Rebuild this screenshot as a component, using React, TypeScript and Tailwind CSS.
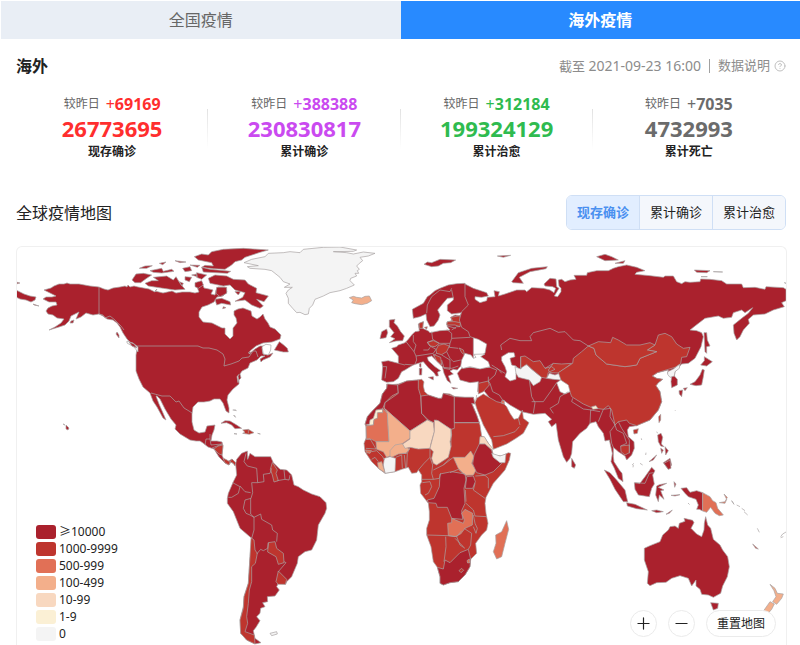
import React, { useState } from "react";
import { CircleHelp, Minus, Plus } from "lucide-react";
import { clsx } from "clsx";

const STATS = [
  { label: "现存确诊", total: "26773695", change: "69169", color: "text-[#ff2e2e]" },
  { label: "累计确诊", total: "230830817", change: "388388", color: "text-[#ca4af0]" },
  { label: "累计治愈", total: "199324129", change: "312184", color: "text-[#2fbb4f]" },
  { label: "累计死亡", total: "4732993", change: "7035", color: "text-[#6b6b6b]" },
];

const LEGEND = [
  { label: "≥10000", color: "bg-[#aa212d]" },
  { label: "1000-9999", color: "bg-[#be352e]" },
  { label: "500-999", color: "bg-[#e17056]" },
  { label: "100-499", color: "bg-[#f3af8b]" },
  { label: "10-99", color: "bg-[#f8d8c0]" },
  { label: "1-9", color: "bg-[#fbf0d5]" },
  { label: "0", color: "bg-[#f4f4f4]" },
];

const FILLS = {
  a: "#aa212d",
  b: "#be352e",
  c: "#e17056",
  d: "#f3af8b",
  e: "#f8d8c0",
  f: "#fbf0d5",
  z: "#f4f4f4",
  sea: "#ffffff",
  line: "none",
};

interface Region {
  id: string;
  x: number;
  y: number;
  scale: number;
  shapes: [keyof typeof FILLS, string][];
}

// each region has its own origin, outlines are on a 3x grid except for the mainland
const REGIONS: Region[] = [
  {
    id: "north-america",
    x: 0,
    y: 0,
    scale: 1,
    shapes: [
      ["a", "M44 290L51 288 54 286 59 284 64 284 67 283 70 284 79 284 90 286 99 287 104 289 108 290 113 288 120 287 125 286 127 287 128 285 130 287 134 286 138 287 149 289 155 292 157 289 155 291 163 293 172 291 176 293 182 292 190 292 195 293 199 292 197 287 202 282 204 288 209 289 213 290 211 294 215 295 216 290 218 287 225 287 227 292 223 296 217 297 214 302 208 305 202 307 199 312 199 317 203 322 212 323 222 328 225 328 225 334 230 339 233 336 233 328 237 323 236 318 234 315 234 311 238 309 243 308 251 311 252 316 257 319 260 317 263 314 265 319 268 323 270 327 275 329 281 335 280 339 272 342 263 343 256 346 250 351 249 354 255 349 260 346 264 346 262 348 263 354 268 355 273 353 270 357 263 360 261 362 260 359 265 356 261 356 257 360 250 363 248 368 242 371 240 374 241 378 239 380 239 384 233 389 228 395 227 400 229 408 229 413 226 411 223 403 220 399 214 399 210 401 204 402 198 402 193 407 192 414 192 422 194 430 199 433 205 432 207 426 215 425 214 430 212 435 211 441 217 441 222 442 223 446 222 455 224 460 227 462 232 459 236 463 234 464 231 462 229 465 225 463 219 457 214 449 208 447 203 443 200 441 196 441 190 440 180 434 175 429 176 425 171 419 165 409 160 399 157 396 156 396 159 404 163 413 166 420 163 418 157 407 153 401 150 393 143 387 139 379 136 371 136 355 137 349 131 343 127 339 123 333 120 327 117 323 113 320 107 319 103 316 99 314 93 315 86 313 81 317 76 319 79 312 71 316 69 321 65 325 59 327 49 330 55 327 61 323 64 319 57 318 53 315 48 314 46 311 48 308 52 306 57 305 56 302 49 302 43 299 46 297 52 297 56 296 50 293Z"],
      ["a", "M16 290L24 294 30 296 36 297 35 300 31 302 26 300 20 299 16 297ZM16 282L20 283 16 284ZM33 304L39 306 34 305ZM71 321L74 320 73 323 70 323ZM117 332L119 335 119 338 116 334Z"],
      ["sea", "M127 341L133 343 138 347 138 352 134 347 127 343Z"],
      ["a", "M129 342L134 344 137 348 132 346Z"],
      ["line", "M99 287V314L103 315 105 318 110 316 115 320 121 326 124 330M136 346L198 346 203 348 209 348 217 350 223 354 225 359 224 366 231 364 239 361 242 358 249 357 253 351 256 351 258 357M151 393L162 396 170 396 176 402 179 401 184 408 189 411 192 413"],
      ["line", "M205 445L206 439 210 439 210 434M210 439L211 445 222 444M212 448L222 444"],
      ["b", "M214 449L218 446 223 445 222 455 219 454Z"],
      ["b", "M223 458L227 460 230 462 232 459 236 463 235 466 233 463 230 462 229 465 225 463Z"],
      ["a", "M66 425L69 428 68 430 66 429ZM63 424L65 425Z"],
    ],
  },
  {
    id: "arctic",
    x: 120,
    y: 240,
    scale: 3,
    shapes: [
      ["a", "M223 50L245 42 265 45 275 35 310 28 370 25 445 30 420 37 405 42 375 52 365 60 345 65 335 75 315 88 280 86 245 82 255 76 280 78 275 68 235 60Z"],
      ["a", "M265 115L285 105 320 108 340 118 375 120 385 132 410 145 408 158 445 168 432 185 410 178 430 198 420 205 395 195 375 180 345 184 368 172 375 158 345 150 330 135 310 138 270 130Z"],
      ["a", "M36 120L48 102 70 100 95 105 80 115 62 128 45 128ZM75 130L95 122 115 122 100 112 140 108 160 120 168 110 180 130 195 148 165 150 130 145 85 138ZM58 85L75 78 97 77 80 85ZM90 92L125 85 130 94 155 88 162 94 125 99 100 97ZM118 70L138 66 128 74ZM165 62L198 66 180 68ZM188 85L210 80 215 92 195 95ZM210 75L240 76 232 82ZM245 82L270 88 332 94 322 100 250 96ZM215 105L230 102 232 110ZM230 98L260 105 245 118 230 112ZM195 110L215 112 208 125 195 120ZM225 128L245 122 250 135 235 145 225 140ZM290 142L320 142 320 160 300 170 288 160ZM345 155L362 154 355 165ZM285 178L305 175 330 185 332 195 305 190 290 195ZM310 200L318 203 308 206ZM178 125L190 130 186 138Z"],
      ["a", "M463 330L478 305 490 314 502 325 505 336 490 336ZM385 338L390 335 392 340Z"],
      ["sea", "M426 320L438 313 453 315 452 330 445 345 430 342Z"],
      ["line", "M338 510L348 510M340 525L346 532"],
      ["sea", "M357 403L354 408 356 420 354 428 351 410Z"],
    ],
  },
  {
    id: "greenland",
    x: 240,
    y: 240,
    scale: 3,
    shapes: [
      ["z", "M12 68L35 58 75 50 85 40 130 38 150 35 180 38 190 28 250 22 300 21 350 30 340 34 280 35 320 38 340 42 370 36 405 40 385 48 360 52 368 62 358 70 350 78 358 88 352 92 356 100 345 100 350 108 332 115 330 122 343 135 320 145 300 152 270 158 250 168 225 178 218 195 208 205 205 222 195 224 180 217 170 218 158 205 145 190 145 175 138 160 145 150 157 142 133 142 150 132 130 125 120 112 105 100 95 92 75 88 30 85 22 80 55 77Z"],
      ["d", "M328 173L340 169 350 172 365 174 375 169 388 168 395 182 382 190 365 194 345 191 335 188 340 180Z"],
    ],
  },
  {
    id: "south-america",
    x: 140,
    y: 390,
    scale: 3,
    shapes: [
      ["a", "M287 222L290 208 305 190 322 183 323 208 330 190 345 200 375 200 392 200 400 218 420 238 440 240 455 255 462 285 475 290 490 300 515 312 540 320 558 338 560 355 555 370 535 405 530 450 515 480 495 485 475 500 472 520 455 560 440 575 437 583 415 580 410 590 418 600 405 618 382 620 383 635 368 638 375 650 362 655 360 670 350 680 360 692 348 712 340 722 345 745 363 758 345 762 320 750 302 730 300 690 310 650 312 620 325 580 330 500 335 445 300 415 280 365 262 340 262 325 265 310 280 275 290 255Z"],
      ["b", "M333 443L342 450 345 480 352 490 346 520 335 530 335 575 328 600 325 640 320 680 323 700 315 725 343 735 345 762 320 750 302 730 300 690 310 655 312 620 325 580 330 500Z"],
      ["b", "M385 458L405 455 410 475 430 490 432 518 415 523 408 500 383 486ZM415 543L440 568 436 583 415 583 408 575ZM397 217L412 240 408 250 415 272 402 276 397 255 391 238Z"],
      ["a", "M243 100L255 92 270 93 290 105 305 115 285 116 275 105 260 98ZM282 131L291 132ZM353 130L361 132Z"],
      ["b", "M308 120L325 118 342 128 328 133 308 130 315 127Z"],
      ["z", "M390 730L410 725 412 732 395 737Z"],
      ["line", "M318 190L312 215 322 228 350 235 353 278 335 278 338 308 333 325 315 330 310 355 318 370 330 375 342 382 362 372 365 388 395 405 398 420 412 430 410 455M300 288L315 305 332 308M278 278L300 290 295 310 275 322 265 322M353 278L372 275 370 253 390 250 395 235M412 272L435 268 432 240M435 268L447 270 450 255M332 325L332 372 342 382 342 420 335 445M350 492L362 478 370 482 383 475 385 458M432 515L438 518 415 545M325 118V130M280 60L290 62M283 75L287 82"],
    ],
  },
  {
    id: "africa",
    x: 350,
    y: 370,
    scale: 3,
    shapes: [
      ["b", "M110 42L125 44 145 42 170 33 200 30 215 28 222 35 220 48 224 65 235 75 265 85 275 85 280 70 300 72 315 80 345 82 370 82 375 102 365 100 380 135 390 165 395 198 403 202 425 235 430 255 455 258 475 248 482 250 478 270 465 300 430 340 408 382 405 400 408 430 414 460 410 480 395 495 377 520 380 550 362 568 360 590 345 615 325 635 300 638 280 645 270 640 270 620 262 592 250 575 243 530 230 495 230 475 238 450 238 425 235 400 212 370 210 345 215 335 215 315 205 300 200 308 185 310 175 292 155 298 135 305 105 310 85 295 65 275 45 245 42 220 48 205 48 170 45 163 52 140 65 125 90 100 97 72 110 55Z"],
      ["f", "M75 120L98 118 98 128 85 128 82 145 72 150 70 165 50 166Z"],
      ["a", "M112 42L143 45 145 68 125 78 105 98 98 116 78 120 70 145 60 150 58 163 45 163 52 140 65 125 90 100 97 72 110 55Z"],
      ["a", "M143 45L170 33 205 30 205 55 212 78 215 130 232 150 180 183 103 115 105 98 145 70Z"],
      ["a", "M213 78L235 75 265 85 275 85 280 70 313 80 313 175 303 178 258 150 250 158 235 150 215 130Z"],
      ["a", "M313 80L345 82 370 82 375 102 365 100 380 135 388 158 313 158Z"],
      ["c", "M98 115L112 130 117 215 78 215 65 208 50 208 48 168 70 165 72 148 82 145 82 128 98 128Z"],
      ["d", "M103 115L180 183 180 205 155 222 130 240 120 258 110 262 100 245 80 238 78 215 117 215 112 130Z"],
      ["d", "M120 258L120 242 135 225 157 221 178 238 168 250 145 252 125 262Z"],
      ["e", "M180 183L232 150 250 158 253 185 243 220 240 235 205 237 180 232 165 235 158 222 180 207Z"],
      ["e", "M253 150L265 152 303 178 305 195 300 215 303 230 295 262 260 285 250 280 245 265 250 245 240 235 253 185Z"],
      ["z", "M103 265L120 260 137 265 135 305 105 310 100 285Z"],
      ["d", "M83 278L95 275 105 308 85 295Z"],
      ["c", "M47 240L65 242 60 250 50 248Z"],
      ["d", "M310 262L330 262 345 262 362 243 372 260 365 280 378 300 370 315 345 316 325 295Z"],
      ["e", "M390 200L403 200 415 220 428 235 425 240 405 222 388 222Z"],
      ["a", "M388 222L405 222 425 240 430 262 455 280 430 305 405 315 380 308 368 282 372 255Z"],
      ["z", "M425 250L450 258 468 252 465 278 450 278 430 262Z"],
      ["a", "M270 312L305 305 345 312 348 330 342 355 345 400 335 422 338 448 305 445 292 412 262 412 258 400 235 398 232 390 252 385 268 350ZM350 320L370 318 376 335 368 355 346 355Z"],
      ["c", "M293 460L305 458 305 445 340 460 343 450 335 430 345 418 368 430 367 465 345 475 332 492 315 500 295 497Z"],
      ["a", "M262 592L280 597 285 570 300 578 330 548 355 538 362 568 360 590 345 615 325 635 300 638 280 645 270 640 270 620Z"],
      ["b", "M327 602L335 595 341 601 333 608Z"],
      ["c", "M351 572L358 567 360 578 353 579ZM470 452L476 478 465 520 455 560 440 567 430 545 438 520 437 495 455 485Z"],
      ["line", "M45 208L60 206 78 237 48 235M65 245L80 242 98 260 103 270M65 268L75 262 85 275M137 262L155 255 157 295M163 255L167 295M157 250L172 250 180 232M172 250L170 293M205 300L222 280 240 262 240 237M240 262L248 285 245 310 250 328 215 328M250 300L280 285 300 265M250 328L268 325 272 310M280 285L310 262M217 338L240 335 245 350 235 370 225 375M345 315L325 298 300 308M376 318L405 316 415 325 415 355M375 340L370 360 405 385M346 360L348 395M348 400L370 420 375 438 410 440M370 435L375 460 382 475 378 490 370 470M342 475L365 490 362 525 355 538M335 482L320 500 330 525 345 535M230 495L295 497 322 500M287 500L288 530 282 575M315 505L340 530M303 178V230M313 158H388M430 200L440 198 485 188"],
    ],
  },
  {
    id: "europe",
    x: 370,
    y: 270,
    scale: 3,
    shapes: [
      ["a", "M127 118L145 108 160 100 172 80 180 75 195 62 210 55 235 45 260 41 285 40 290 55 310 60 310 270 270 290 262 300 250 298 240 303 250 312 235 318 243 340 232 332 222 310 217 290 205 278 185 258 172 262 175 272 195 290 212 302 203 306 205 318 198 318 192 308 175 293 160 275 145 280 130 285 118 292 105 300 95 305 85 325 70 335 50 337 35 330 38 290 35 275 55 272 85 280 85 258 65 235 80 230 85 225 105 218 115 208 125 195 135 185 148 183 145 162 160 155 158 175 175 183 180 188 210 182 240 180 232 170 230 158 245 152 242 142 255 135 270 137 275 128 245 132 232 122 232 105 250 90 250 83 232 85 215 105 203 120 210 135 205 150 192 168 180 170 170 150 168 132 150 140 130 145Z"],
      ["a", "M58 150L75 148 72 158 82 168 92 185 103 198 98 212 78 213 58 218 75 206 62 200 72 188 58 170ZM35 185L50 177 53 188 48 203 30 206ZM148 282L153 280 153 292 149 290ZM148 295L156 295 155 315 148 315ZM175 322L190 320 190 330ZM245 352L263 355 250 357Z"],
      ["b", "M147 160L160 155 158 175 148 175ZM163 172L172 170 170 178ZM172 217L190 212 208 220 195 230 180 228ZM198 240L205 226 222 222 238 228 230 245 215 254 200 250ZM190 253L212 262 215 285 200 273ZM268 234L280 240 284 255 275 248ZM242 142L270 137 272 152 270 170 255 165 230 165 232 155 248 152Z"],
      ["line", "M245 55L240 65 210 60 185 80 172 105 170 130M245 60L250 85M230 178L245 190 245 205 240 220 208 220 188 208 185 185M245 180L260 170 270 170M245 205L300 202M240 220L238 232 265 235M230 245L240 265 250 275 272 270M130 195L130 215 138 225 132 245 108 215M132 245L138 258 190 250 198 238 180 228 172 217 190 210M105 283L130 285M138 258L140 270 135 282M38 290L50 290 45 325M85 280L105 285M215 255L240 270 240 298 222 295 215 270M220 292L245 295 265 288M160 240L175 240 180 232M200 250L190 258M232 155H255L270 158M232 168L258 175"],
    ],
  },
  {
    id: "asia",
    x: 490,
    y: 240,
    scale: 3,
    shapes: [
      ["a", "M-75 132L-50 145 -10 158 -5 168 -25 172 -45 170 -45 178 -30 188 -10 182 -8 172 15 170 12 152 28 155 25 168 45 162 80 150 105 150 110 155 125 143 160 145 180 150 192 158 197 145 188 140 165 138 162 132 180 115 198 117 200 140 207 145 193 168 203 170 213 155 213 145 207 138 205 120 215 118 225 125 240 120 258 118 252 106 290 106 292 98 320 92 355 92 370 85 385 80 410 75 440 82 465 92 440 97 435 103 480 107 520 112 525 108 550 108 560 125 575 131 585 125 600 127 630 125 632 117 660 118 695 122 710 132 755 132 760 143 795 142 825 148 828 140 880 143 888 148 888 182 875 188 883 200 850 210 825 222 790 225 775 238 778 250 760 270 750 290 740 300 732 280 730 255 755 235 775 220 788 203 765 218 755 210 730 218 725 232 700 235 685 228 645 235 615 258 600 270 620 272 635 278 640 290 633 320 615 355 595 370 575 372 555 395 553 408 562 418 562 435 545 443 543 425 545 410 533 400 535 390 502 398 487 408 500 415 518 418 505 428 498 437 510 455 515 485 505 510 480 540 450 552 440 557 418 560 412 570 415 590 432 605 433 625 425 645 410 660 405 648 385 635 370 622 370 650 372 665 388 690 396 700 399 725 385 715 373 685 363 665 367 640 358 600 345 603 340 580 325 560 318 545 300 550 290 565 270 580 248 605 245 640 240 655 230 667 220 650 205 600 198 550 185 560 175 545 185 538 165 520 130 523 95 515 60 495 40 480 45 500 20 500 -20 450 -37 455 -35 425 -60 428 -90 420 -98 400 -85 385 -60 382 -35 385 0 382 -15 360 -30 348 -15 340 -10 312 -35 298 -60 290 -65 275 -85 262 -92 240 -85 215 -65 195 -75 170Z"],
      ["b", "M-40 475L-20 462 20 485 40 490 50 500 60 520 72 538 85 535 97 510 100 535 117 548 100 580 78 595 50 612 10 628 5 600 -20 555 -40 505 -45 488Z"],
      ["b", "M-35 430L-5 423 -2 435 -20 455 -35 462Z"],
      ["c", "M35 482L43 482 42 492 35 490Z"],
      ["sea", "M-88 380L-85 360 -75 340 -57 345 -50 355 -42 352 -48 343 -15 342 -28 350 -5 365 0 380 -30 387 -60 380 -80 385Z"],
      ["sea", "M35 350L55 338 72 338 75 350 60 355 65 375 78 378 85 388 78 400 78 418 60 423 45 410 50 395 45 380 35 362Z"],
      ["z", "M75 380L92 387 100 373 112 375 125 388 155 412 150 425 130 437 118 420 85 412 78 400Z"],
      ["b", "M92 350L105 348 130 365 150 362 165 385 185 380 195 388 175 397 170 415 155 412 125 387 110 373 92 385ZM175 390L190 370 215 372 245 370 225 385 205 399 180 398Z"],
      ["z", "M170 415L178 400 195 405 208 400 213 420 190 418Z"],
      ["b", "M295 318L312 325 318 345 350 372 405 380 440 375 450 355 500 335 472 330 495 315 505 285 525 280 545 290 560 312 580 325 600 322 590 350 575 352 572 372 555 382 535 388 502 398 487 408 500 415 518 418 505 428 498 437 510 455 515 485 505 510 480 540 440 557 418 550 410 540 385 545 375 555 365 510 355 497 340 508 305 503 280 492 245 470 238 450 213 420 205 398 225 385 248 370 250 355 275 335Z"],
      ["b", "M295 318L325 305 362 308 368 292 385 300 410 315 450 315 480 308 495 315 472 330 500 335 450 355 440 375 405 380 350 372 318 345 312 325Z"],
      ["sea", "M200 428L212 420 235 435 240 455 225 462 210 455Z"],
      ["z", "M533 395L550 387 570 372 568 385 555 395 553 408 540 412 533 403Z"],
      ["f", "M305 500L318 497 324 506 308 508Z"],
      ["b", "M392 618L418 615 418 638 405 645 393 635ZM430 570L445 566 442 580 432 582ZM506 530L512 523 512 540 507 548Z"],
      ["a", "M65 125L85 98 125 85 172 80 168 86 120 95 88 112 100 130 70 128ZM22 48L62 46 40 52ZM-10 72ZM320 50L345 43 365 50 385 60 345 62ZM375 70L405 62 400 70ZM613 90L660 92 650 98 620 97ZM670 95L698 96ZM633 110L652 110ZM883 128L888 130ZM245 655L257 675 253 685 245 680Z"],
      ["a", "M-198 73L-188 66 -175 68 -150 58 -103 60 -118 68 -140 70 -155 78 -175 80Z"],
      ["a", "M642 278L650 278 652 300 660 318 650 320 650 340 645 335ZM643 350L667 365 650 378 632 375 643 362ZM637 388L643 390 640 410 635 435 618 437 600 433 615 425 630 405ZM567 452L578 450 575 470 568 462ZM580 445L592 443 585 452Z"],
      ["a", "M503 585L513 580 518 592 514 612 522 620 512 618 505 605ZM512 625L520 630 515 640ZM525 620L535 632 527 645ZM520 668L540 655 545 675 535 688 525 675ZM477 665L500 645 490 660Z"],
      ["line", "M92 350V387M35 330L32 315 60 295 90 302 125 302 120 290 130 278 180 265 205 277 225 275 250 300 270 302 295 318M165 385L190 370M40 483L28 465 8 455 0 430 -5 423 -5 410M5 375L25 388 35 400M20 385L45 400M0 382L20 390 15 405 -5 423M118 420L125 470 135 488 130 520M125 485L160 485 185 450 200 428M190 520L180 505 205 490 210 470 235 455M248 475L245 485 280 507 305 510M300 550L302 510 330 515M325 545L340 508 362 505 360 530 375 555 360 575 365 610 370 622M375 555L380 570 400 580 410 610 392 618M385 545L395 565 418 600 418 640M10 590L40 587 75 575 88 560M90 555L85 535M-42 480L-40 465"],
      ["line", "M555 510L556 512M454 595L455 600M468 638L467 645M430 675L429 682M500 575L503 580"],
    ],
  },
  {
    id: "oceania",
    x: 590,
    y: 460,
    scale: 3,
    shapes: [
      ["a", "M163 265L180 257 210 245 218 225 235 210 240 200 255 198 265 205 268 190 285 184 282 175 308 181 312 188 303 205 320 222 335 230 342 210 343 190 347 170 353 195 362 205 370 238 390 255 398 270 413 290 418 320 412 350 398 378 392 400 370 412 355 405 335 403 330 388 318 378 318 360 305 378 295 355 270 347 245 355 228 367 200 368 180 377 172 370 175 335 163 300Z"],
      ["a", "M362 428L385 430 383 445 370 450ZM43 30L60 38 80 60 105 90 113 125 100 125 75 88 60 58ZM110 128L135 133 172 150 140 146 112 138ZM133 68L150 70 165 50 185 22 195 32 188 45 193 72 185 85 178 110 145 105 135 88ZM200 78L208 74 230 70 205 82 222 90 212 92 222 118 208 105 205 125 197 105ZM185 152L200 150 220 155 200 158ZM228 163L247 150 238 160ZM243 106L270 104 255 108ZM252 65L258 72 254 82ZM222 10L240 0 243 25 235 28Z"],
      ["a", "M273 85L290 83 300 97 320 92 338 98 338 153 328 148 320 148 325 135 318 118 295 110 285 100ZM295 130L298 133Z"],
      ["c", "M338 98L360 110 368 122 378 128 383 145 400 165 388 167 375 160 362 142 350 157 338 153ZM388 128L405 125 412 112 402 102 410 118 405 130ZM425 122L432 133Z"],
      ["b", "M488 252L505 267 497 265Z"],
      ["d", "M540 373L555 385 562 400 580 402 575 415 560 433 548 425 558 410 552 392ZM540 425L553 432 545 448 530 465 515 480 505 475Z"],
      ["line", "M440 135L450 140M455 145L465 152M462 155L473 165M502 205L508 217M572 230L578 222 588 216M572 233L580 230M135 68L165 70 178 40 190 38M126 15L132 10M150 10L158 15"],
    ],
  },
];

function WorldMap() {
  return (
    <svg viewBox="17 247 769 398" className="block w-full" role="img" aria-label="全球疫情地图">
      {REGIONS.map((region) => (
        <g key={region.id} transform={`translate(${region.x} ${region.y}) scale(${1 / region.scale})`}>
          {region.shapes.map(([level, d], i) => (
            <path
              key={i}
              d={d}
              fill={FILLS[level]}
              stroke="#a9a4a4"
              strokeWidth={0.7}
              strokeLinejoin="round"
              vectorEffect="non-scaling-stroke"
            />
          ))}
        </g>
      ))}
    </svg>
  );
}

const METRICS = ["现存确诊", "累计确诊", "累计治愈"];

export default function App() {
  const [metric, setMetric] = useState("现存确诊");

  return (
    <div className="bg-white font-['Noto_Sans','Noto_Sans_CJK_SC',sans-serif] text-[#222]">
      <nav className="grid grid-cols-2 pl-px pt-px text-base">
        <button className="h-[38px] bg-[#e9eef5] text-[#666]">全国疫情</button>
        <button className="h-[38px] bg-[#288aff] font-bold text-white">海外疫情</button>
      </nav>

      <main className="pl-4 pr-[13px]">
        <div className="flex h-[54px] items-center justify-between pr-px">
          <h1 className="text-base font-bold">海外</h1>
          <div className="flex items-center text-[13px] text-[#8c8c8c]">
            <span>
              截至 <span className="text-sm">2021-09-23 16:00</span>
            </span>
            <span className="mx-2 h-3.5 w-px bg-[#a0a0a0]" />
            <a href="#about" className="flex items-center gap-1">
              数据说明
              <CircleHelp className="h-3 w-3 text-[#c0c0c0]" />
            </a>
          </div>
        </div>

        <div className="grid grid-cols-4 pr-0.5 text-center">
          {STATS.map((stat, i) => (
            <div key={stat.label} className="relative">
              {i > 0 && (
                <div className="absolute -left-px top-4 h-10 w-px bg-linear-to-b from-[#e2e2e2] to-white" />
              )}
              <div className="flex h-[22px] items-center justify-center gap-1.5 text-xs text-[#666]">
                较昨日
                <span className={clsx("text-base leading-[22px]", stat.color)}>
                  +<b>{stat.change}</b>
                </span>
              </div>
              <div className={clsx("text-[22px] font-bold leading-[26px]", stat.color)}>{stat.total}</div>
              <div className="text-xs font-bold leading-[22px]">{stat.label}</div>
            </div>
          ))}
        </div>

        <div className="mt-8 flex items-center justify-between pr-px">
          <h2 className="text-base">全球疫情地图</h2>
          <div className="flex divide-x divide-[#cfdff5] overflow-hidden rounded-md border border-[#cfdff5]">
            {METRICS.map((m) => (
              <button
                key={m}
                onClick={() => setMetric(m)}
                className={clsx(
                  "h-[33px] px-2.5 text-[13px]",
                  m === metric ? "bg-[#e2eeff] font-bold text-[#4a90f0]" : "bg-[#f4f7fc]"
                )}
              >
                {m}
              </button>
            ))}
          </div>
        </div>

        <section className="relative mt-4 overflow-hidden rounded-t-md border border-b-0 border-[#f0f0f0]">
          <WorldMap />
          <ul className="absolute bottom-[3px] left-[19px] text-xs">
            {LEGEND.map((item) => (
              <li key={item.label} className="flex h-[17px] items-center gap-[3px]">
                <span className={clsx("h-3.5 w-5 rounded-[3px]", item.color)} />
                {item.label}
              </li>
            ))}
          </ul>
          <div className="absolute bottom-2 right-2.5 flex gap-[11px]">
            <button aria-label="放大" className="flex h-[27px] w-[27px] items-center justify-center rounded-full border border-[#ebebeb] bg-white">
              <Plus className="h-[19px] w-[19px]" strokeWidth={1.5} />
            </button>
            <button aria-label="缩小" className="flex h-[27px] w-[27px] items-center justify-center rounded-full border border-[#ebebeb] bg-white">
              <Minus className="h-[19px] w-[19px]" strokeWidth={1.5} />
            </button>
            <button className="h-[27px] rounded-full border border-[#ebebeb] bg-white px-2.5 text-xs">重置地图</button>
          </div>
        </section>
      </main>
    </div>
  );
}
